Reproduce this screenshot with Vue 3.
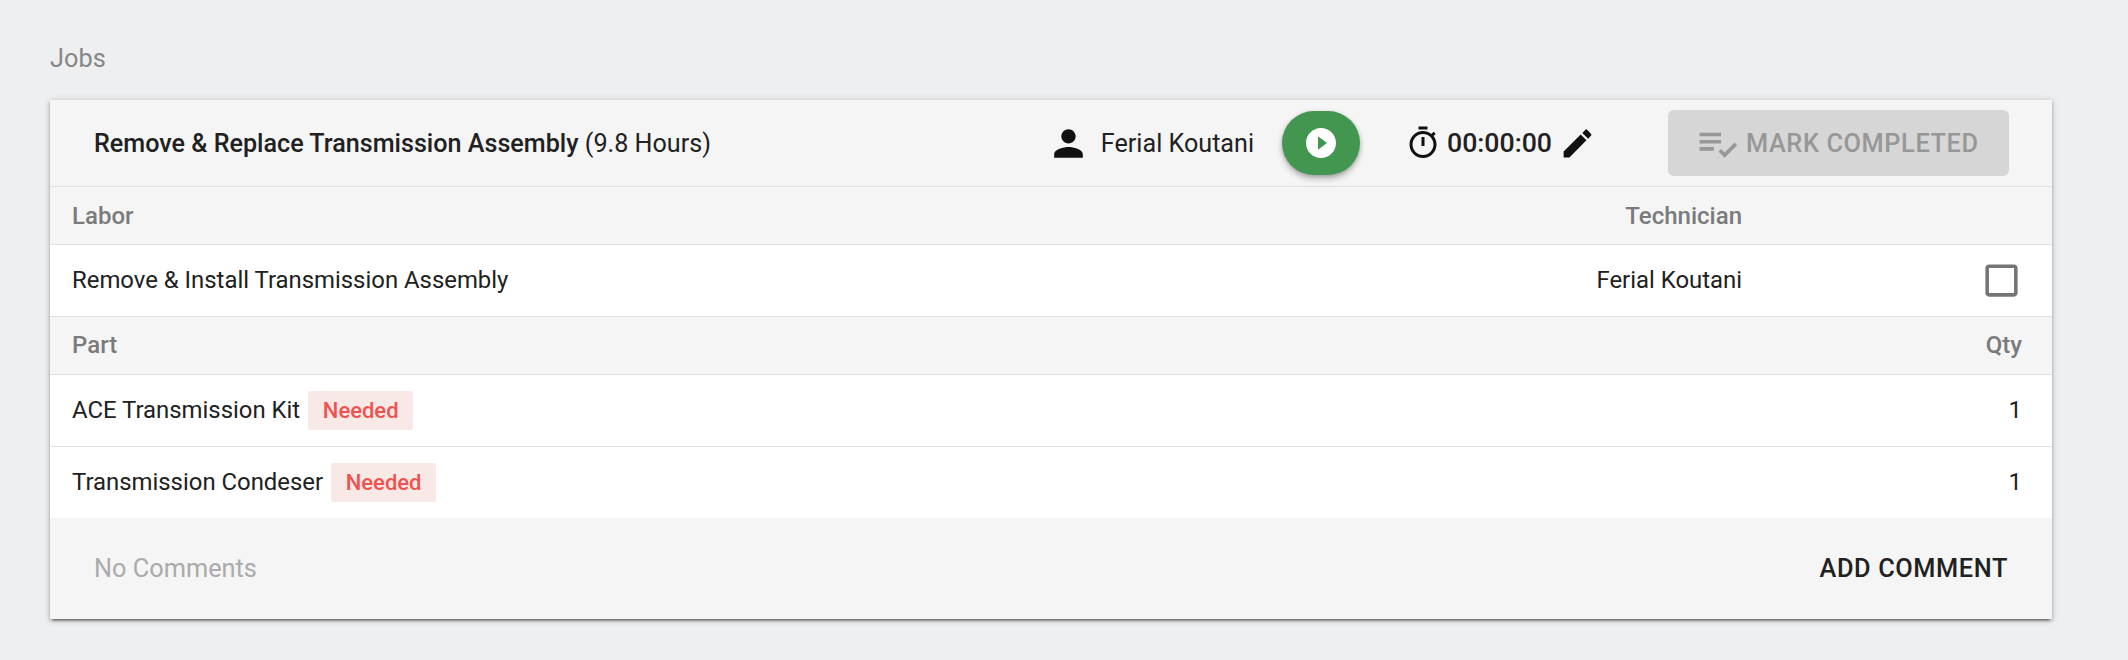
<script setup>
const labor = { name: 'Remove & Install Transmission Assembly', tech: 'Ferial Koutani' }
const parts = [
  { name: 'ACE Transmission Kit', status: 'Needed', qty: 1 },
  { name: 'Transmission Condeser', status: 'Needed', qty: 1 },
]
</script>

<template>
  <div class="page">
    <div class="section-title">Jobs</div>
    <section class="card">
      <header class="job-head">
        <div class="job-title"><strong>Remove &amp; Replace Transmission Assembly</strong> (9.8 Hours)</div>
        <svg class="icon person" viewBox="0 0 24 24"><path d="M12 12c2.21 0 4-1.79 4-4s-1.79-4-4-4-4 1.79-4 4 1.79 4 4 4zm0 2c-2.67 0-8 1.34-8 4v2h16v-2c0-2.66-5.33-4-8-4z"/></svg>
        <span class="assignee">Ferial Koutani</span>
        <button class="play" type="button">
          <svg viewBox="0 0 24 24"><path d="M12 2C6.48 2 2 6.48 2 12s4.48 10 10 10 10-4.48 10-10S17.52 2 12 2zm-2 14.5v-9l6 4.5-6 4.5z"/></svg>
        </button>
        <svg class="icon timer" viewBox="0 0 24 24"><path d="M15 1H9v2h6V1zm-4 13h2V8h-2v6zm8.03-6.61l1.42-1.42c-.43-.51-.9-.99-1.41-1.41l-1.42 1.42C16.07 4.74 14.12 4 12 4c-4.97 0-9 4.03-9 9s4.02 9 9 9 9-4.03 9-9c0-2.12-.74-4.07-1.97-5.61zM12 20c-3.87 0-7-3.13-7-7s3.13-7 7-7 7 3.13 7 7-3.13 7-7 7z"/></svg>
        <span class="time">00:00:00</span>
        <svg class="icon edit" viewBox="0 0 24 24"><path d="M3 17.25V21h3.75L17.81 9.94l-3.75-3.75L3 17.25zM20.71 7.04c.39-.39.39-1.02 0-1.41l-2.34-2.34c-.39-.39-1.02-.39-1.41 0l-1.83 1.83 3.75 3.75 1.83-1.83z"/></svg>
        <button class="mark" type="button" disabled>
          <svg viewBox="0 0 24 24"><path d="M14 10H2v2h12v-2zm0-4H2v2h12V6zM2 16h8v-2H2v2zm19.5-4.5L23 13l-6.99 7-3.51-3.5L14 15l2.01 2 5.49-5.5z"/></svg>
          MARK COMPLETED
        </button>
      </header>

      <div class="row head">
        <span class="grow">Labor</span>
        <span class="tech">Technician</span>
      </div>
      <div class="row line">
        <span class="grow">{{ labor.name }}</span>
        <span class="tech">{{ labor.tech }}</span>
        <svg class="check" viewBox="0 0 24 24"><path d="M19 5v14H5V5h14m0-2H5c-1.1 0-2 .9-2 2v14c0 1.1.9 2 2 2h14c1.1 0 2-.9 2-2V5c0-1.1-.9-2-2-2z"/></svg>
      </div>
      <div class="row head head-part">
        <span class="grow">Part</span>
        <span>Qty</span>
      </div>
      <div v-for="p in parts" :key="p.name" class="row line part">
        <span>{{ p.name }}</span>
        <span class="badge">{{ p.status }}</span>
        <span class="grow"></span>
        <span>{{ p.qty }}</span>
      </div>

      <footer class="foot">
        <span class="none">No Comments</span>
        <button class="add" type="button">ADD COMMENT</button>
      </footer>
    </section>
  </div>
</template>

<style>
html, body { margin: 0; background: #eeeff1; }
</style>

<style scoped>
.page {
  box-sizing: border-box;
  height: 660px;
  padding: 45px 76px 0 50px;
  font-family: Roboto, "Liberation Sans", sans-serif;
  font-size: 25.33px;
  color: #212121;
  -webkit-font-smoothing: antialiased;
}
.section-title {
  height: 28px;
  line-height: 28px;
  margin-bottom: 27px;
  color: #878787;
}
.card {
  background: #fff;
  box-shadow: 0 4px 2px -3px rgba(0, 0, 0, .45), 0 2px 3px rgba(0, 0, 0, .24), 0 1px 7px rgba(0, 0, 0, .2);
}
button {
  font-family: inherit;
  border: 0;
  padding: 0;
}
svg { fill: currentColor; display: block; flex: none; }
.job-head {
  box-sizing: border-box;
  height: 87px;
  display: flex;
  align-items: center;
  padding: 0 43px 0 44px;
  background: #f5f5f5;
  border-bottom: 1px solid #e0e0e0;
  font-size: 25.15px;
}
.job-title { flex: 1; }
.job-title strong { font-weight: 500; }
.person { width: 43px; height: 43px; margin-right: 11px; color: #111; }
.assignee { margin-right: 28px; }
.play {
  width: 78px;
  height: 64px;
  border-radius: 32px;
  background: #43964f;
  color: #fff;
  display: flex;
  align-items: center;
  justify-content: center;
  box-shadow: 0 4px 7px -1px rgba(0, 0, 0, .3), 0 1px 4px rgba(0, 0, 0, .15);
}
.play svg { width: 36px; height: 36px; }
.timer { width: 36px; height: 36px; margin: 0 6px 0 45px; color: #111; }
.time { font-size: 26.67px; font-weight: 500; margin-right: 7px; }
.edit { width: 37px; height: 37px; margin-right: 72px; color: #111; }
.mark {
  box-sizing: border-box;
  width: 341px;
  height: 66px;
  border-radius: 6px;
  background: #d6d6d6;
  color: #979797;
  font-size: 25.33px;
  font-weight: 500;
  letter-spacing: .6px;
  display: flex;
  align-items: center;
  padding-left: 28px;
  gap: 7px;
}
.mark svg { width: 43px; height: 43px; }
.row {
  box-sizing: border-box;
  display: flex;
  align-items: center;
  padding: 0 30px 0 22px;
  border-bottom: 1px solid #e0e0e0;
}
.grow { flex: 1; }
.head {
  height: 58px;
  background: #f5f5f5;
  color: #7b7b7b;
  font-weight: 500;
  font-size: 24px;
}
.head-part > span { padding-bottom: 2px; }
.line { height: 72px; background: #fff; font-size: 23.9px; }
.line > span:not(.badge) { padding-bottom: 2px; }
.line:last-of-type { height: 71px; border-bottom: 0; }
.tech { margin-right: 280px; }
.line .tech { margin-right: 0; }
.check { width: 43px; height: 43px; color: #757575; margin: 0 -1px 0 238px; }
.badge {
  margin-left: 8px;
  height: 39px;
  width: 105px;
  display: flex;
  align-items: center;
  justify-content: center;
  border-radius: 2px;
  background: #f8e9e7;
  color: #ef5350;
  font-size: 22px;
  font-weight: 500;
}
.foot {
  height: 101px;
  display: flex;
  align-items: center;
  justify-content: space-between;
  padding: 0 44px 0 44px;
  background: #f5f5f5;
}
.none { color: #ababab; }
.add {
  background: none;
  color: #212121;
  font-size: 25.33px;
  font-weight: 500;
  letter-spacing: .6px;
}
</style>
